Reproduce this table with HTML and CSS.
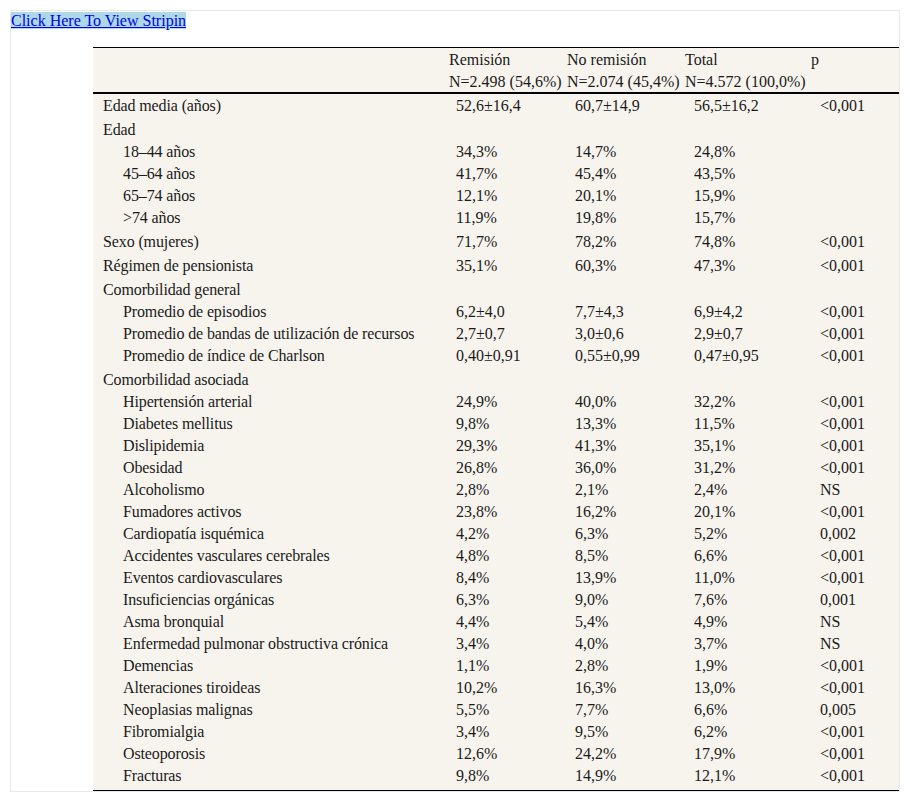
FILE: index.html
```html
<!DOCTYPE html>
<html lang="es">
<head>
<meta charset="utf-8">
<title>Tabla</title>
<link rel="stylesheet" href="styles.css">
</head>
<body>
<div class="frame">
  <div class="linkbar"><a href="#" class="striplink">Click Here To View Stripin</a></div>
  <table class="data">
    <colgroup>
      <col class="c1"><col class="c2"><col class="c3"><col class="c4"><col class="c5">
    </colgroup>
    <thead>
      <tr><th rowspan="2"></th><th>Remisión</th><th>No remisión</th><th>Total</th><th>p</th></tr>
      <tr><th>N=2.498 (54,6%)</th><th>N=2.074 (45,4%)</th><th>N=4.572 (100,0%)</th><th></th></tr>
    </thead>
    <tbody>
      <tr class="first"><td>Edad media (años)</td><td>52,6±16,4</td><td>60,7±14,9</td><td>56,5±16,2</td><td>&lt;0,001</td></tr>
      <tr class="g"><td>Edad</td><td></td><td></td><td></td><td></td></tr>
      <tr class="s"><td>18–44 años</td><td>34,3%</td><td>14,7%</td><td>24,8%</td><td></td></tr>
      <tr class="s"><td>45–64 años</td><td>41,7%</td><td>45,4%</td><td>43,5%</td><td></td></tr>
      <tr class="s"><td>65–74 años</td><td>12,1%</td><td>20,1%</td><td>15,9%</td><td></td></tr>
      <tr class="s"><td>&gt;74 años</td><td>11,9%</td><td>19,8%</td><td>15,7%</td><td></td></tr>
      <tr class="g"><td>Sexo (mujeres)</td><td>71,7%</td><td>78,2%</td><td>74,8%</td><td>&lt;0,001</td></tr>
      <tr class="g"><td>Régimen de pensionista</td><td>35,1%</td><td>60,3%</td><td>47,3%</td><td>&lt;0,001</td></tr>
      <tr class="g"><td>Comorbilidad general</td><td></td><td></td><td></td><td></td></tr>
      <tr class="s"><td>Promedio de episodios</td><td>6,2±4,0</td><td>7,7±4,3</td><td>6,9±4,2</td><td>&lt;0,001</td></tr>
      <tr class="s"><td>Promedio de bandas de utilización de recursos</td><td>2,7±0,7</td><td>3,0±0,6</td><td>2,9±0,7</td><td>&lt;0,001</td></tr>
      <tr class="s"><td>Promedio de índice de Charlson</td><td>0,40±0,91</td><td>0,55±0,99</td><td>0,47±0,95</td><td>&lt;0,001</td></tr>
      <tr class="g"><td>Comorbilidad asociada</td><td></td><td></td><td></td><td></td></tr>
      <tr class="s"><td>Hipertensión arterial</td><td>24,9%</td><td>40,0%</td><td>32,2%</td><td>&lt;0,001</td></tr>
      <tr class="s"><td>Diabetes mellitus</td><td>9,8%</td><td>13,3%</td><td>11,5%</td><td>&lt;0,001</td></tr>
      <tr class="s"><td>Dislipidemia</td><td>29,3%</td><td>41,3%</td><td>35,1%</td><td>&lt;0,001</td></tr>
      <tr class="s"><td>Obesidad</td><td>26,8%</td><td>36,0%</td><td>31,2%</td><td>&lt;0,001</td></tr>
      <tr class="s"><td>Alcoholismo</td><td>2,8%</td><td>2,1%</td><td>2,4%</td><td>NS</td></tr>
      <tr class="s"><td>Fumadores activos</td><td>23,8%</td><td>16,2%</td><td>20,1%</td><td>&lt;0,001</td></tr>
      <tr class="s"><td>Cardiopatía isquémica</td><td>4,2%</td><td>6,3%</td><td>5,2%</td><td>0,002</td></tr>
      <tr class="s"><td>Accidentes vasculares cerebrales</td><td>4,8%</td><td>8,5%</td><td>6,6%</td><td>&lt;0,001</td></tr>
      <tr class="s"><td>Eventos cardiovasculares</td><td>8,4%</td><td>13,9%</td><td>11,0%</td><td>&lt;0,001</td></tr>
      <tr class="s"><td>Insuficiencias orgánicas</td><td>6,3%</td><td>9,0%</td><td>7,6%</td><td>0,001</td></tr>
      <tr class="s"><td>Asma bronquial</td><td>4,4%</td><td>5,4%</td><td>4,9%</td><td>NS</td></tr>
      <tr class="s"><td>Enfermedad pulmonar obstructiva crónica</td><td>3,4%</td><td>4,0%</td><td>3,7%</td><td>NS</td></tr>
      <tr class="s"><td>Demencias</td><td>1,1%</td><td>2,8%</td><td>1,9%</td><td>&lt;0,001</td></tr>
      <tr class="s"><td>Alteraciones tiroideas</td><td>10,2%</td><td>16,3%</td><td>13,0%</td><td>&lt;0,001</td></tr>
      <tr class="s"><td>Neoplasias malignas</td><td>5,5%</td><td>7,7%</td><td>6,6%</td><td>0,005</td></tr>
      <tr class="s"><td>Fibromialgia</td><td>3,4%</td><td>9,5%</td><td>6,2%</td><td>&lt;0,001</td></tr>
      <tr class="s"><td>Osteoporosis</td><td>12,6%</td><td>24,2%</td><td>17,9%</td><td>&lt;0,001</td></tr>
      <tr class="s last"><td>Fracturas</td><td>9,8%</td><td>14,9%</td><td>12,1%</td><td>&lt;0,001</td></tr>
    </tbody>
  </table>
</div>
</body>
</html>
```

FILE: styles.css
```css
html, body {
  margin: 0;
  padding: 0;
  background: #ffffff;
}

body {
  font-family: "Liberation Serif", "Times New Roman", serif;
  font-size: 16px;
  color: #1a1a1a;
}

.frame {
  margin: 10px;
  border: 1px solid #e8e8e8;
  background: #ffffff;
}

.linkbar {
  height: 19px;
  line-height: 19px;
}

.striplink {
  color: #0000ee;
  text-decoration: underline;
  background: #add8e6;
}

.data {
  margin: 17px 0 0 82px;
  width: 806px;
  table-layout: fixed;
  border-collapse: separate;
  border-spacing: 0;
  background: #f7f4ee;
}

.c1 { width: 352px; }
.c2 { width: 118px; }
.c3 { width: 118px; }
.c4 { width: 126px; }
.c5 { width: 92px; }

.data th {
  font-weight: normal;
  text-align: left;
  padding: 3px 0 1px 4px;
  line-height: 18px;
  white-space: nowrap;
  vertical-align: top;
}

.data thead tr:first-child th {
  border-top: 1px solid #000000;
}

.data thead tr:last-child th,
.data thead th[rowspan] {
  border-bottom: 2px solid #000000;
}

.data td {
  padding: 3px 0 1px 0;
  line-height: 18px;
  white-space: nowrap;
  vertical-align: top;
}

.data td:nth-child(1) { padding-left: 10px; letter-spacing: -0.12px; }
.data td:nth-child(2) { padding-left: 11px; }
.data td:nth-child(3) { padding-left: 12px; }
.data td:nth-child(4) { padding-left: 13px; }
.data td:nth-child(5) { padding-left: 13px; }

.data tr.g td { padding-top: 5px; }
.data tr.s td:nth-child(1) { padding-left: 30px; }

.data tr.last td {
  padding-bottom: 5px;
  border-bottom: 1px solid #000000;
}
```
